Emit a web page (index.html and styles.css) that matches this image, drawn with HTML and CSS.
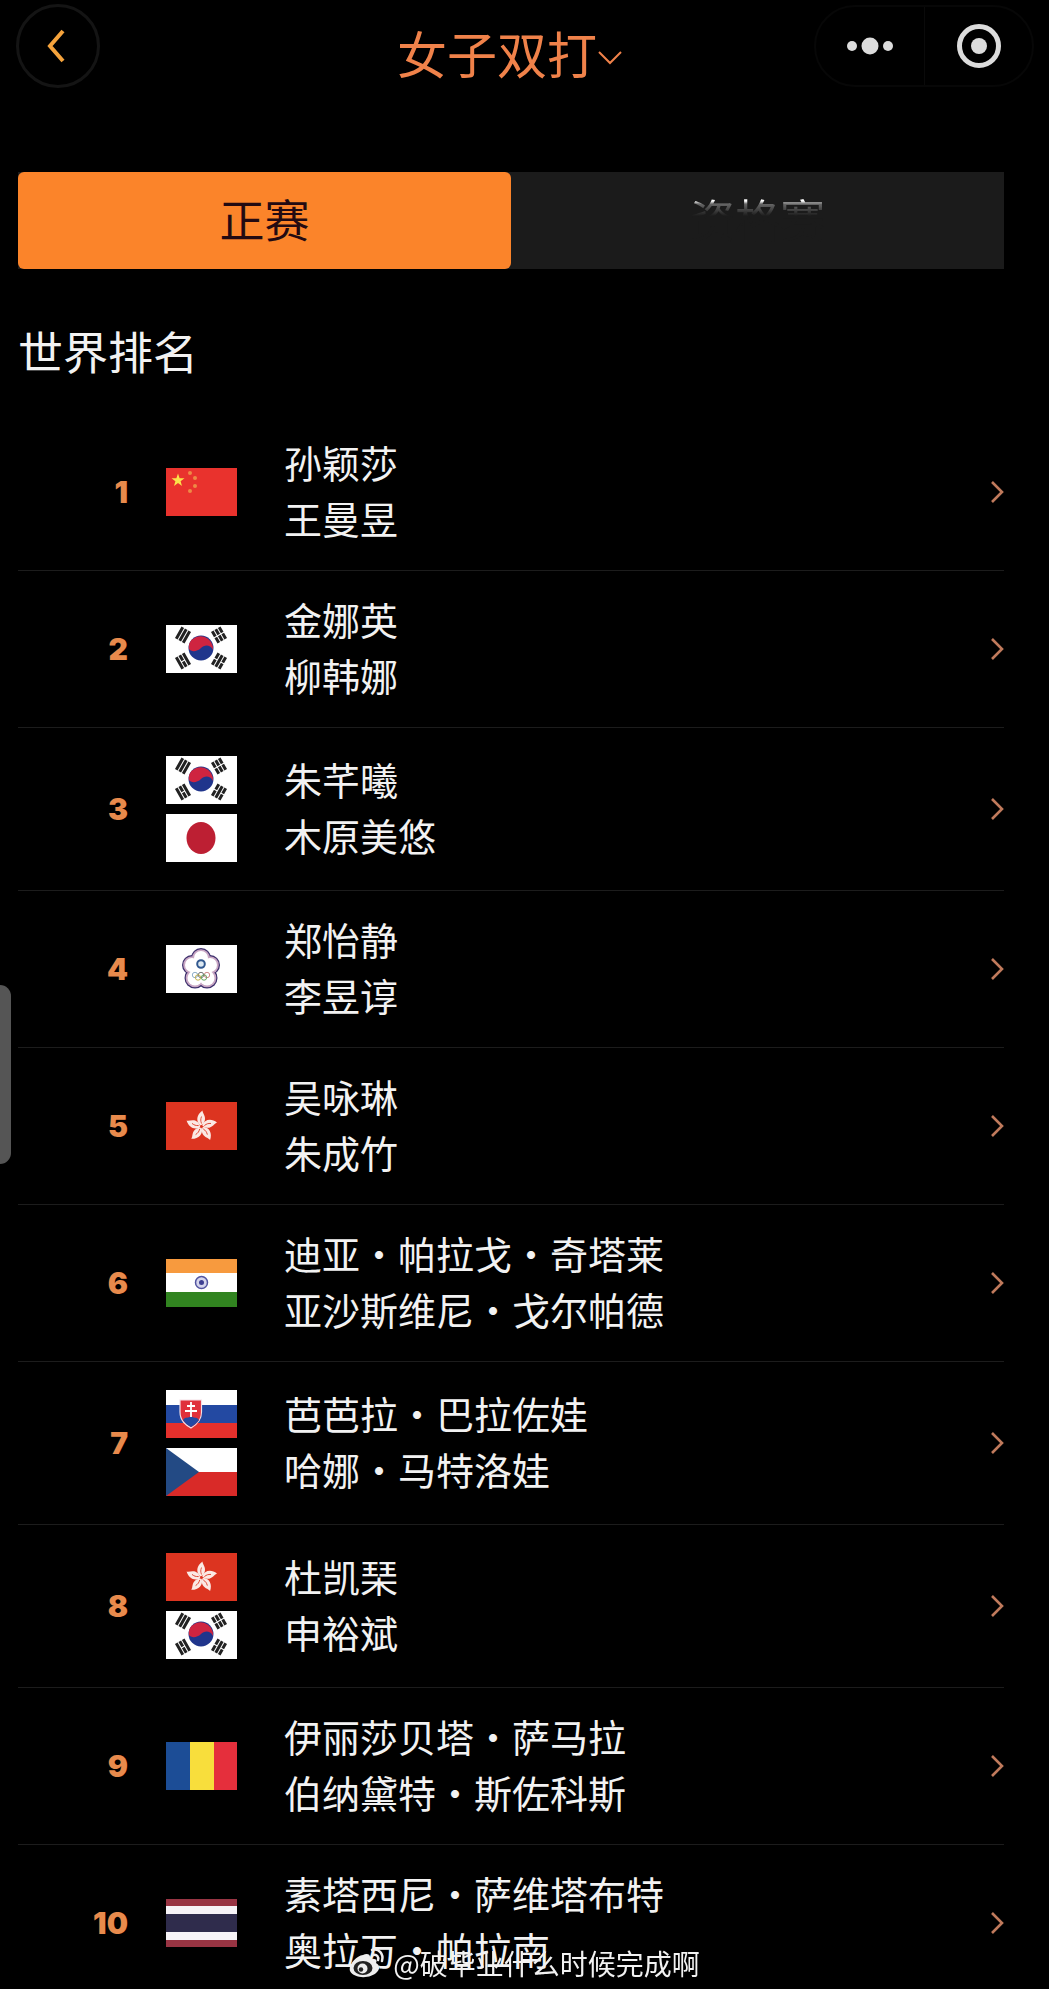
FILE: index.html
```html
<!DOCTYPE html>
<html lang="zh-CN">
<head>
  <meta charset="UTF-8">
  <meta name="viewport" content="width=device-width, initial-scale=1">
  <title>女子双打 - 世界排名</title>
  <link rel="stylesheet" href="styles.css">
</head>
<body>

<!-- Bandeiras e ícones -->
<svg class="sprites" aria-hidden="true">
  <symbol id="chevron" viewBox="0 0 14 24">
    <path d="M2 2 L12 12 L2 22" fill="none" stroke="currentColor" stroke-width="2.6"/>
  </symbol>

  <symbol id="flag-cn" viewBox="0 0 71 48">
    <rect width="71" height="48" fill="#e9322d"/>
    <path d="M12 5.500 L13.600 10.300 L18.500 10.300 L14.600 13.200 L16 18 L12 15.100 L8 18 L9.400 13.200 L5.500 10.300 L10.400 10.300 Z" fill="#fbe34b"/>
    <g fill="#ee8a45"><circle cx="24" cy="5" r="2"/><circle cx="29" cy="10" r="2"/><circle cx="29" cy="18" r="2"/><circle cx="24" cy="23" r="2"/></g>
  </symbol>

  <symbol id="flag-kr" viewBox="0 0 71 48">
    <rect width="71" height="48" fill="#fff"/>
    <circle cx="35" cy="23" r="12.500" fill="#20358c"/>
    <path d="M23.500 18 A12.500 12.500 0 0 1 47 25 C44 19 38 20 35 23 C31 27 25 27 23 24 C22.500 22 23 20 23.500 18 Z" fill="#cf2440"/>
    <g stroke="#222" stroke-width="3">
      <g transform="translate(17 10) rotate(-60)"><path d="M-6.500 -4H6.500M-6.500 0H6.500M-6.500 4H6.500"/></g>
      <g transform="translate(53 10) rotate(60)"><path d="M-6.500 -4H-.5M.5 -4H6.500M-6.500 0H-.5M.5 0H6.500M-6.500 4H-.5M.5 4H6.500"/></g>
      <g transform="translate(17 36) rotate(60)"><path d="M-6.500 -4H6.500M-6.500 0H-.5M.5 0H6.500M-6.500 4H6.500"/></g>
      <g transform="translate(53 36) rotate(-60)"><path d="M-6.500 -4H-.5M.5 -4H6.500M-6.500 0H6.500M-6.500 4H-.5M.5 4H6.500"/></g>
    </g>
  </symbol>

  <symbol id="flag-jp" viewBox="0 0 71 48">
    <rect width="71" height="48" fill="#fff"/>
    <ellipse cx="35" cy="24" rx="14.500" ry="16" fill="#bd1f33"/>
  </symbol>

  <symbol id="flag-tpe" viewBox="0 0 71 48">
    <rect width="71" height="48" fill="#fff"/>
    <g fill="#3b2e6b"><circle cx="35" cy="13" r="10"/><circle cx="44" cy="20" r="10"/><circle cx="41" cy="33" r="10.500"/><circle cx="29" cy="33" r="10.500"/><circle cx="26" cy="20" r="10"/></g>
    <g fill="#c9a7c4"><circle cx="35" cy="13" r="8.800"/><circle cx="44" cy="20" r="8.800"/><circle cx="41" cy="33" r="9.300"/><circle cx="29" cy="33" r="9.300"/><circle cx="26" cy="20" r="8.800"/></g>
    <g fill="#fff"><circle cx="35" cy="13" r="7"/><circle cx="44" cy="20" r="7"/><circle cx="41" cy="33" r="7.500"/><circle cx="29" cy="33" r="7.500"/><circle cx="26" cy="20" r="7"/><circle cx="35" cy="24" r="11"/></g>
    <circle cx="35" cy="19" r="3.800" fill="#dde9f2" stroke="#31588f" stroke-width="2"/>
    <g fill="none" stroke-width="1"><circle cx="29" cy="30" r="2.700" stroke="#8fb0c8"/><circle cx="35" cy="30" r="2.700" stroke="#777"/><circle cx="41" cy="30" r="2.700" stroke="#d08a8a"/><circle cx="32" cy="32.500" r="2.700" stroke="#c8b552"/><circle cx="38" cy="32.500" r="2.700" stroke="#6aa765"/></g>
  </symbol>

  <symbol id="flag-hk" viewBox="0 0 71 48">
    <rect width="71" height="48" fill="#dc3420"/>
    <g transform="translate(35.500 24.500)">
      <g id="petal">
        <path d="M-1 -1 C-6 -5 -5 -12 1 -16 C1 -13 5 -10 3 -5 C2 -3 1 -2 -1 -1 Z" fill="#fbe9e4"/>
        <path d="M0 -3 C-1 -6 -1 -7 0 -10" fill="none" stroke="#dc3420" stroke-width=".8"/>
      </g>
      <use href="#petal" transform="rotate(72)"/>
      <use href="#petal" transform="rotate(144)"/>
      <use href="#petal" transform="rotate(216)"/>
      <use href="#petal" transform="rotate(288)"/>
    </g>
  </symbol>

  <symbol id="flag-in" viewBox="0 0 71 48">
    <rect width="71" height="48" fill="#fff"/>
    <rect width="71" height="14" fill="#f79a3e"/>
    <rect y="33" width="71" height="15" fill="#318420"/>
    <circle cx="35.500" cy="23.500" r="6" fill="#d5d5ec" stroke="#5254a0" stroke-width="1.500"/>
    <circle cx="35.500" cy="23.500" r="2.500" fill="#3d3f92"/>
  </symbol>

  <symbol id="flag-sk" viewBox="0 0 71 48">
    <rect width="71" height="48" fill="#fff"/>
    <rect y="15" width="71" height="18" fill="#2349a2"/>
    <rect y="33" width="71" height="15" fill="#e5302c"/>
    <path d="M14 10 H35.500 V22 C35.500 31 30 35 25 38 C20 35 14 31 14 22 Z" fill="#e0303b" stroke="#f3dfe6" stroke-width="1.200"/>
    <path d="M17 30 C20 26 22 29 25 26 C28 29 30 26 33 30 C31 33 28 35 25 37 C21 35 19 33 17 30 Z" fill="#2349a2"/>
    <path d="M25 12 V27 M21 16 H29 M19 21 H31" stroke="#fff" stroke-width="1.800"/>
  </symbol>

  <symbol id="flag-cz" viewBox="0 0 71 48">
    <rect width="71" height="24" fill="#fff"/>
    <rect y="24" width="71" height="24" fill="#d92a28"/>
    <path d="M0 0 L33 24 L0 48 Z" fill="#234a84"/>
  </symbol>

  <symbol id="flag-ro" viewBox="0 0 71 48">
    <rect width="24" height="48" fill="#1c4d96"/>
    <rect x="24" width="24" height="48" fill="#f8de3c"/>
    <rect x="48" width="23" height="48" fill="#e52f3c"/>
  </symbol>

  <symbol id="flag-th" viewBox="0 0 71 48">
    <rect width="71" height="48" fill="#983443"/>
    <rect y="7" width="71" height="34" fill="#f6f3f7"/>
    <rect y="15" width="71" height="18" fill="#2f2c4c"/>
  </symbol>
</svg>

<div class="app">

  <header class="topbar">
    <button class="back" aria-label="返回">
      <svg width="20" height="34" viewBox="0 0 20 34"><path d="M17 2 L4 17 L17 32" fill="none" stroke="currentColor" stroke-width="4"/></svg>
    </button>

    <div class="title">
      <select aria-label="项目">
        <option>女子双打</option>
      </select>
      <svg width="26" height="16" viewBox="0 0 26 16"><path d="M2 2 L13 13 L24 2" fill="none" stroke="currentColor" stroke-width="2"/></svg>
    </div>

    <div class="capsule">
      <button aria-label="更多">
        <svg width="48" height="20" viewBox="0 0 48 20" fill="currentColor"><circle cx="6" cy="10" r="5"/><circle cx="24" cy="10" r="8.500"/><circle cx="42" cy="10" r="5"/></svg>
      </button>
      <button aria-label="关闭">
        <svg width="44" height="44" viewBox="0 0 44 44"><circle cx="22" cy="22" r="19.500" fill="none" stroke="currentColor" stroke-width="5"/><circle cx="22" cy="22" r="8" fill="currentColor"/></svg>
      </button>
    </div>
  </header>

  <nav class="tabs">
    <button class="tab active">正赛</button>
    <button class="tab"><span class="faded">资格赛</span></button>
  </nav>

  <main>
    <h2>世界排名</h2>

    <ol class="ranking">
      <li><a href="#" class="row">
        <span class="rank">1</span>
        <span class="flags"><svg><use href="#flag-cn"/></svg></span>
        <span class="names"><span>孙颖莎</span><span>王曼昱</span></span>
        <svg class="arrow"><use href="#chevron"/></svg>
      </a></li>
      <li><a href="#" class="row">
        <span class="rank">2</span>
        <span class="flags"><svg><use href="#flag-kr"/></svg></span>
        <span class="names"><span>金娜英</span><span>柳韩娜</span></span>
        <svg class="arrow"><use href="#chevron"/></svg>
      </a></li>
      <li><a href="#" class="row">
        <span class="rank">3</span>
        <span class="flags"><svg><use href="#flag-kr"/></svg><svg><use href="#flag-jp"/></svg></span>
        <span class="names"><span>朱芊曦</span><span>木原美悠</span></span>
        <svg class="arrow"><use href="#chevron"/></svg>
      </a></li>
      <li><a href="#" class="row">
        <span class="rank">4</span>
        <span class="flags"><svg><use href="#flag-tpe"/></svg></span>
        <span class="names"><span>郑怡静</span><span>李昱谆</span></span>
        <svg class="arrow"><use href="#chevron"/></svg>
      </a></li>
      <li><a href="#" class="row">
        <span class="rank">5</span>
        <span class="flags"><svg><use href="#flag-hk"/></svg></span>
        <span class="names"><span>吴咏琳</span><span>朱成竹</span></span>
        <svg class="arrow"><use href="#chevron"/></svg>
      </a></li>
      <li><a href="#" class="row">
        <span class="rank">6</span>
        <span class="flags"><svg><use href="#flag-in"/></svg></span>
        <span class="names"><span>迪亚·帕拉戈·奇塔莱</span><span>亚沙斯维尼·戈尔帕德</span></span>
        <svg class="arrow"><use href="#chevron"/></svg>
      </a></li>
      <li><a href="#" class="row">
        <span class="rank">7</span>
        <span class="flags"><svg><use href="#flag-sk"/></svg><svg><use href="#flag-cz"/></svg></span>
        <span class="names"><span>芭芭拉·巴拉佐娃</span><span>哈娜·马特洛娃</span></span>
        <svg class="arrow"><use href="#chevron"/></svg>
      </a></li>
      <li><a href="#" class="row">
        <span class="rank">8</span>
        <span class="flags"><svg><use href="#flag-hk"/></svg><svg><use href="#flag-kr"/></svg></span>
        <span class="names"><span>杜凯琹</span><span>申裕斌</span></span>
        <svg class="arrow"><use href="#chevron"/></svg>
      </a></li>
      <li><a href="#" class="row">
        <span class="rank">9</span>
        <span class="flags"><svg><use href="#flag-ro"/></svg></span>
        <span class="names"><span>伊丽莎贝塔·萨马拉</span><span>伯纳黛特·斯佐科斯</span></span>
        <svg class="arrow"><use href="#chevron"/></svg>
      </a></li>
      <li><a href="#" class="row">
        <span class="rank">10</span>
        <span class="flags"><svg><use href="#flag-th"/></svg></span>
        <span class="names"><span>素塔西尼·萨维塔布特</span><span>奥拉万·帕拉南</span></span>
        <svg class="arrow"><use href="#chevron"/></svg>
      </a></li>
    </ol>
  </main>
</div>

<div class="side-handle"></div>

<div class="watermark">
  <svg width="36" height="32" viewBox="0 0 36 32">
    <path d="M14 8 C18 6 22 7 21 12 C25 11 29 12 27 16 C31 18 31 22 28 25 C22 32 5 32 1 24 C-1 18 7 9 14 8 Z" fill="#eee"/>
    <ellipse cx="14" cy="21" rx="9.500" ry="7" fill="#222"/>
    <circle cx="13.500" cy="21.500" r="5" fill="#eee"/>
    <circle cx="12" cy="22.500" r="2.200" fill="#222"/>
    <path d="M23 3 C30 1 35 7 33 14 M24 8 C28 7 30 10 29 13" fill="none" stroke="#eee" stroke-width="2.500" stroke-linecap="round"/>
  </svg>
  <span>@破毕业什么时候完成啊</span>
</div>

</body>
</html>
```
FILE: styles.css
```css
* {
  box-sizing: border-box;
}
body {
  margin: 0;
  background-color: #000;
  color: #f2f2f2;
  font-family: "Noto Sans CJK SC", sans-serif;
  font-weight: 400;
}
button, select {
  font-family: inherit;
  font-weight: inherit;
  color: inherit;
  background: none;
  border: none;
  padding: 0;
  margin: 0;
}
.sprites {
  position: absolute;
  width: 0;
  height: 0;
}
.app {
  height: 100vh;
  overflow-y: auto;
  scrollbar-width: none;
  padding: 0 45px 0 18px;
}

/* topo */
.topbar {
  display: grid;
  grid-template-columns: 1fr auto 1fr;
  align-items: center;
  padding-top: 4px;
  margin-right: -30px;
  margin-left: -2px;
}
.back {
  width: 84px;
  height: 84px;
  border: 3px solid #141414;
  border-radius: 50%;
  color: #f5a33c;
  display: flex;
  align-items: center;
  justify-content: center;
}
.back svg {
  margin-right: 4px;
}
.title {
  display: flex;
  align-items: center;
  color: #f0824a;
  padding-top: 12px;
  margin-right: 30px;
}
.title select {
  appearance: none;
  font-size: 50px;
  line-height: 60px;
}
.title svg {
  margin-top: 12px;
}
.capsule {
  justify-self: end;
  display: grid;
  grid-template-columns: 1fr 1fr;
  width: 220px;
  height: 82px;
  border: 2px solid #070707;
  border-radius: 41px;
  color: #dcdcdc;
}
.capsule button {
  display: flex;
  align-items: center;
  justify-content: center;
}
.capsule button + button {
  border-left: 1px solid #0a0a0a;
}

/* abas */
.tabs {
  display: grid;
  grid-template-columns: 1fr 1fr;
  margin-top: 84px;
  background-color: #1b1b1b;
}
.tab {
  height: 97px;
  padding-bottom: 4px;
  font-size: 45px;
  line-height: 60px;
}
.tab.active {
  background-color: #fb842a;
  color: #230a12;
  border-radius: 6px;
}
.faded {
  color: transparent;
  background: linear-gradient(#fff 15px, #666 18px, #1b1b1b 30px);
  background-clip: text;
  -webkit-background-clip: text;
}

h2 {
  margin: 51px 0 32px;
  font-size: 45px;
  line-height: 62px;
  font-weight: 400;
}

/* lista */
.ranking {
  list-style: none;
  margin: 0;
  padding: 0;
}
.ranking li {
  border-bottom: 1px solid #1c1c1c;
}
.row {
  display: flex;
  align-items: center;
  padding: 20px 0;
  color: inherit;
  text-decoration: none;
}
.rank {
  width: 110px;
  text-align: right;
  font-family: Inter, sans-serif;
  font-size: 30px;
  font-weight: 900;
  color: #e88a4c;
}
.flags {
  display: flex;
  flex-direction: column;
  gap: 10px;
  padding: 8px 0;
  margin: 0 47px 0 38px;
}
.flags svg {
  display: block;
  width: 71px;
  height: 48px;
}
.names {
  flex: 1;
  padding-bottom: 4px;
  font-size: 38px;
  line-height: 56px;
}
.names span {
  display: block;
}
.arrow {
  width: 14px;
  height: 24px;
  color: #c07a5c;
}

.side-handle {
  position: fixed;
  left: 0;
  top: 985px;
  width: 11px;
  height: 179px;
  background-color: #555;
  border-radius: 0 11px 11px 0;
}
.watermark {
  position: fixed;
  left: 0;
  right: 0;
  bottom: 8px;
  display: flex;
  align-items: center;
  justify-content: center;
  gap: 8px;
  font-size: 28px;
  line-height: 36px;
}
```
